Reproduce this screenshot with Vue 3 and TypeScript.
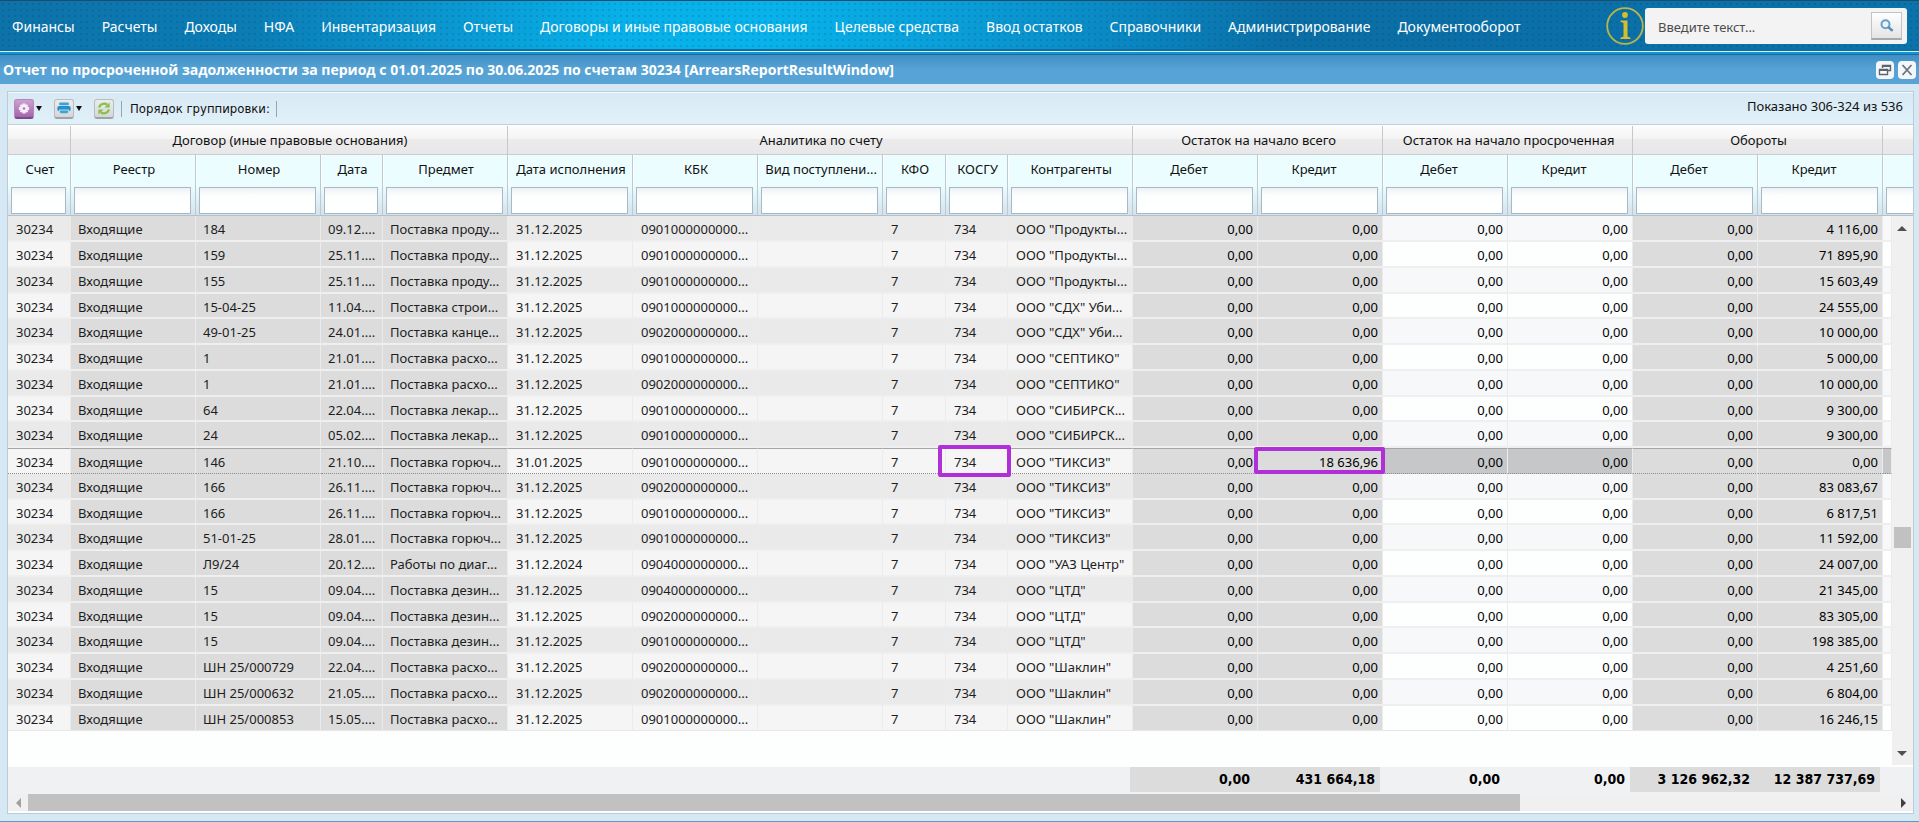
<script setup lang="ts">
import { ref } from 'vue'

interface Column {
  key: string
  label: string
  width: number
  tone: 'light' | 'dark' | 'plain'
  numeric?: boolean
}

interface Row {
  cells: string[]
  selected: boolean
}

const menu: string[] = [
  'Финансы', 'Расчеты', 'Доходы', 'НФА', 'Инвентаризация', 'Отчеты',
  'Договоры и иные правовые основания', 'Целевые средства', 'Ввод остатков',
  'Справочники', 'Администрирование', 'Документооборот',
]

const groups: { label: string; span: number }[] = [
  { label: '', span: 1 },
  { label: 'Договор (иные правовые основания)', span: 4 },
  { label: 'Аналитика по счету', span: 6 },
  { label: 'Остаток на начало всего', span: 2 },
  { label: 'Остаток на начало просроченная', span: 2 },
  { label: 'Обороты', span: 2 },
  { label: '', span: 1 },
]

const columns: Column[] = [
  { key: 'account', label: 'Счет', width: 63, tone: 'light' },
  { key: 'registry', label: 'Реестр', width: 125, tone: 'dark' },
  { key: 'number', label: 'Номер', width: 125, tone: 'dark' },
  { key: 'date', label: 'Дата', width: 62, tone: 'dark' },
  { key: 'subject', label: 'Предмет', width: 125, tone: 'dark' },
  { key: 'due', label: 'Дата исполнения', width: 125, tone: 'light' },
  { key: 'kbk', label: 'КБК', width: 125, tone: 'light' },
  { key: 'income', label: 'Вид поступлени...', width: 125, tone: 'light' },
  { key: 'kfo', label: 'КФО', width: 63, tone: 'light' },
  { key: 'kosgu', label: 'КОСГУ', width: 62, tone: 'light' },
  { key: 'partner', label: 'Контрагенты', width: 125, tone: 'light' },
  { key: 'openDebit', label: 'Дебет', width: 125, tone: 'dark', numeric: true },
  { key: 'openCredit', label: 'Кредит', width: 125, tone: 'dark', numeric: true },
  { key: 'overdueDebit', label: 'Дебет', width: 125, tone: 'plain', numeric: true },
  { key: 'overdueCredit', label: 'Кредит', width: 125, tone: 'plain', numeric: true },
  { key: 'turnDebit', label: 'Дебет', width: 125, tone: 'dark', numeric: true },
  { key: 'turnCredit', label: 'Кредит', width: 125, tone: 'dark', numeric: true },
]

const source: [string, string, string, string, string, string][] = [
  ['184', '09.12....', 'Поставка проду...', '0901', 'ООО "Продукты...', '4 116,00'],
  ['159', '25.11....', 'Поставка проду...', '0901', 'ООО "Продукты...', '71 895,90'],
  ['155', '25.11....', 'Поставка проду...', '0901', 'ООО "Продукты...', '15 603,49'],
  ['15-04-25', '11.04....', 'Поставка строи...', '0901', 'ООО "СДХ" Уби...', '24 555,00'],
  ['49-01-25', '24.01....', 'Поставка канце...', '0902', 'ООО "СДХ" Уби...', '10 000,00'],
  ['1', '21.01....', 'Поставка расхо...', '0901', 'ООО "СЕПТИКО"', '5 000,00'],
  ['1', '21.01....', 'Поставка расхо...', '0902', 'ООО "СЕПТИКО"', '10 000,00'],
  ['64', '22.04....', 'Поставка лекар...', '0901', 'ООО "СИБИРСК...', '9 300,00'],
  ['24', '05.02....', 'Поставка лекар...', '0901', 'ООО "СИБИРСК...', '9 300,00'],
  ['146', '21.10....', 'Поставка горюч...', '0901', 'ООО "ТИКСИЗ"', '0,00'],
  ['166', '26.11....', 'Поставка горюч...', '0902', 'ООО "ТИКСИЗ"', '83 083,67'],
  ['166', '26.11....', 'Поставка горюч...', '0901', 'ООО "ТИКСИЗ"', '6 817,51'],
  ['51-01-25', '28.01....', 'Поставка горюч...', '0901', 'ООО "ТИКСИЗ"', '11 592,00'],
  ['Л9/24', '20.12....', 'Работы по диаг...', '0904', 'ООО "УАЗ Центр"', '24 007,00'],
  ['15', '09.04....', 'Поставка дезин...', '0904', 'ООО "ЦТД"', '21 345,00'],
  ['15', '09.04....', 'Поставка дезин...', '0902', 'ООО "ЦТД"', '83 305,00'],
  ['15', '09.04....', 'Поставка дезин...', '0901', 'ООО "ЦТД"', '198 385,00'],
  ['ШН 25/000729', '22.04....', 'Поставка расхо...', '0902', 'ООО "Шаклин"', '4 251,60'],
  ['ШН 25/000632', '21.05....', 'Поставка расхо...', '0902', 'ООО "Шаклин"', '6 804,00'],
  ['ШН 25/000853', '15.05....', 'Поставка расхо...', '0901', 'ООО "Шаклин"', '16 246,15'],
]

const rows: Row[] = source.map(([num, date, subject, kbk, partner, credit]) => {
  const selected = num === '146'
  const due = selected ? '31.01.2025' : num === 'Л9/24' ? '31.12.2024' : '31.12.2025'
  return {
    selected,
    cells: [
      '30234', 'Входящие', num, date, subject, due, `${kbk}000000000...`, '', '7', '734', partner,
      '0,00', selected ? '18 636,96' : '0,00', '0,00', '0,00', '0,00', credit,
    ],
  }
})

const totals = ['0,00', '431 664,18', '0,00', '0,00', '3 126 962,32', '12 387 737,69']

const search = ref('')
const filters = ref<string[]>(columns.map(() => '').concat(''))

function mark(row: Row, key: string): string {
  if (!row.selected) return ''
  if (key === 'kosgu') return 'mark mark-tall'
  if (key === 'openCredit') return 'mark'
  return ''
}
</script>

<template>
  <div class="page">
    <header class="top">
      <nav class="menu">
        <button v-for="m in menu" :key="m" type="button">{{ m }}</button>
      </nav>
      <div class="tools">
        <svg class="info" viewBox="0 0 38 38" aria-hidden="true">
          <circle cx="19" cy="19" r="17.8" fill="none" stroke="#b9b646" stroke-width="1.8" />
          <circle cx="19" cy="8" r="2.9" fill="#d3bf2c" />
          <path d="M14.5 13.5h7v16l3 1.3v1.2h-10v-1.2l3-1.3V16l-3-1.2z" fill="#d3bf2c" />
        </svg>
        <div class="search">
          <input v-model="search" type="text" placeholder="Введите текст..." aria-label="Введите текст" />
          <button type="button" aria-label="Найти">
            <svg viewBox="0 0 16 16" aria-hidden="true">
              <circle cx="6.5" cy="6.2" r="4" fill="#e8f3fb" stroke="#6ba0c6" stroke-width="2" />
              <path d="M9.8 9.4l3 2.8" stroke="#5a90ba" stroke-width="2.6" stroke-linecap="round" />
            </svg>
          </button>
        </div>
      </div>
    </header>

    <section class="window">
      <div class="titlebar">
        <h1>Отчет по просроченной задолженности за период с 01.01.2025 по 30.06.2025 по счетам 30234 [ArrearsReportResultWindow]</h1>
        <div class="wbtns">
          <button type="button" aria-label="Восстановить">
            <svg viewBox="0 0 14 14" aria-hidden="true">
              <path d="M4.5 5V2.5h8v5h-3M4.5 3.2h8" fill="none" stroke="#5b656d" stroke-width="1.4" />
              <path d="M1.5 6.5h8v5h-8zM1.5 7.2h8" fill="#fff" stroke="#5b656d" stroke-width="1.4" />
            </svg>
          </button>
          <button type="button" aria-label="Закрыть">
            <svg viewBox="0 0 14 14" aria-hidden="true">
              <path d="M2.5 2l9 10M11.5 2l-9 10" stroke="#6b757d" stroke-width="1.8" />
            </svg>
          </button>
        </div>
      </div>

      <div class="panel">
        <div class="toolbar">
          <button class="tool" type="button" aria-label="Настройки">
            <span class="ico violet">
              <svg viewBox="0 0 18 17" aria-hidden="true">
                <g fill="#f6eef8">
                  <circle cx="9" cy="8.5" r="3.8" />
                  <path d="M7.4 3.4h3.2v10.2H7.4zM3.9 6.9h10.2v3.2H3.9z" />
                  <path d="M4.7 5.7l1.5-1.5 7.1 7.1-1.5 1.5zM11.8 4.2l1.5 1.5-7.1 7.1-1.5-1.5z" />
                </g>
                <circle cx="9" cy="8.5" r="1.3" fill="#b679b8" />
              </svg>
            </span>
            <span class="caret"></span>
          </button>
          <button class="tool" type="button" aria-label="Печать">
            <span class="ico">
              <svg viewBox="0 0 18 17" aria-hidden="true">
                <rect x="4.2" y="2.6" width="9.6" height="2.6" rx=".8" fill="#3aa3da" />
                <rect x="2.4" y="6" width="13.2" height="5.2" rx="1.6" fill="#2191d0" />
                <path d="M4.2 10h9.6l-.8 3.8H5z" fill="#3aa3da" stroke="#e6e6e6" stroke-width=".8" />
              </svg>
            </span>
            <span class="caret"></span>
          </button>
          <button class="tool last" type="button" aria-label="Обновить">
            <span class="ico">
              <svg viewBox="0 0 18 17" aria-hidden="true">
                <g fill="none" stroke="#86c04a" stroke-width="2.2">
                  <path d="M4.2 7.6A5 4.6 0 0 1 12.2 4.6" />
                  <path d="M13.8 9.4A5 4.6 0 0 1 5.8 12.4" />
                </g>
                <path d="M14.6 2.4v5H9.4zM3.4 14.6v-5h5.2z" fill="#86c04a" />
              </svg>
            </span>
          </button>
          <span class="sep"></span>
          <span class="group-order">Порядок группировки:</span>
          <span class="sep"></span>
          <span class="shown">Показано 306-324 из 536</span>
        </div>

        <div class="grid-head">
          <table>
            <colgroup>
              <col v-for="c in columns" :key="c.key" :class="'w' + c.width" />
              <col />
            </colgroup>
            <thead>
              <tr class="groups">
                <th v-for="(g, i) in groups" :key="i" :colspan="g.span">{{ g.label }}</th>
              </tr>
              <tr class="labels">
                <th v-for="c in columns" :key="c.key" :class="{ numeric: c.numeric }">{{ c.label }}</th>
                <th></th>
              </tr>
              <tr class="filters">
                <td v-for="(c, i) in columns" :key="c.key">
                  <input v-model="filters[i]" type="text" :aria-label="'Фильтр: ' + c.label" />
                </td>
                <td class="cut"><input v-model="filters[17]" type="text" aria-label="Фильтр" /></td>
              </tr>
            </thead>
          </table>
        </div>

        <div class="grid-main">
          <div class="grid-body">
            <table>
              <colgroup>
                <col v-for="c in columns" :key="c.key" :class="'w' + c.width" />
                <col />
              </colgroup>
              <tbody>
                <tr v-for="(r, i) in rows" :key="i" :class="{ selected: r.selected }">
                  <td
                    v-for="(c, j) in columns"
                    :key="c.key"
                    :class="[c.tone, mark(r, c.key), { numeric: c.numeric }]"
                  >{{ r.cells[j] }}</td>
                  <td class="plain"></td>
                </tr>
              </tbody>
            </table>
          </div>
          <div class="vscroll">
            <button type="button" aria-label="Вверх"><span class="arrow up"></span></button>
            <div class="track"><div class="above"></div><div class="thumb"></div><div class="below"></div></div>
            <button type="button" aria-label="Вниз"><span class="arrow down"></span></button>
          </div>
        </div>

        <div class="grid-foot">
          <table>
            <colgroup>
              <col class="w60" />
              <col v-for="c in columns.slice(1)" :key="c.key" :class="'w' + c.width" />
              <col />
            </colgroup>
            <tbody>
              <tr>
                <td colspan="11"></td>
                <td v-for="(t, i) in totals" :key="i" :class="{ dark: i !== 2 && i !== 3 }">{{ t }}</td>
                <td></td>
              </tr>
            </tbody>
          </table>
        </div>

        <div class="hscroll">
          <button type="button" aria-label="Влево"><span class="arrow left"></span></button>
          <div class="htrack"><div class="hthumb"></div></div>
          <button type="button" aria-label="Вправо"><span class="arrow right"></span></button>
        </div>
      </div>
    </section>
  </div>
</template>

<style>
body {
  margin: 0;
}
</style>

<style scoped>
.page {
  display: flex;
  flex-direction: column;
  box-sizing: border-box;
  min-height: 100vh;
  overflow: hidden;
  font-family: "Noto Sans", "DejaVu Sans", sans-serif;
  font-size: 13px;
  color: #111;
  background: #d6e8f3;
  border-bottom: 1px solid #5b9cc4;
}
button {
  font: inherit;
  border: 0;
  padding: 0;
  margin: 0;
  background: none;
  color: inherit;
}
input {
  font: inherit;
  box-sizing: border-box;
  margin: 0;
}

/* top menu */
.top {
  display: flex;
  align-items: center;
  justify-content: space-between;
  box-sizing: border-box;
  height: 55px;
  padding: 0 12px 4px;
  border-top: 1px solid #1d4d6c;
  background:
    linear-gradient(to bottom, transparent 48px, #0d6ea4 48px, #0d6ea4 50px, #cdf0fb 50px, #cdf0fb 51px, #1296cf 51px, #1296cf 53px, #1c6a9d 53px),
    radial-gradient(circle, rgba(0, 40, 90, 0.14) 1px, transparent 1px) 0 0 / 6px 6px,
    linear-gradient(100deg, #0d72a8 0%, #0b7cb4 13%, #0b93cc 22%, #07b0e8 32%, #07b3ea 40%, #0aa0da 49%, #0a80ba 61%, #0b6ea5 67%, #0b72aa 100%);
  color: #fff;
}
.menu {
  display: flex;
  gap: 27px;
  font-size: 14px;
  line-height: 24px;
  white-space: nowrap;
  padding-top: 2px;
}
.tools {
  display: flex;
  align-items: center;
  gap: 1px;
}
.info {
  width: 38px;
  height: 38px;
}
.search {
  display: flex;
  align-items: center;
  gap: 4px;
  box-sizing: border-box;
  width: 262px;
  height: 36px;
  padding: 0 5px 0 0;
  border-radius: 3px;
  background: #f3f3f3;
}
.search input {
  flex: 1;
  min-width: 0;
  height: 36px;
  border: 0;
  padding: 2px 0 0 13px;
  background: transparent;
  outline: 0;
  font-size: 13px;
}
.search input::placeholder {
  color: #4c4c4c;
  opacity: 1;
}
.search button {
  display: flex;
  align-items: center;
  justify-content: center;
  box-sizing: border-box;
  width: 31px;
  height: 28px;
  border: 1px solid #c3c3c3;
  border-bottom: 2px solid #a9a9ad;
  background: linear-gradient(#fff, #e4e4e6);
}
.search svg {
  width: 16px;
  height: 16px;
}

/* window frame */
.window {
  flex: 1;
  display: flex;
  flex-direction: column;
}
.titlebar {
  display: flex;
  align-items: center;
  justify-content: space-between;
  box-sizing: border-box;
  height: 29px;
  padding: 0 3px 0 3px;
  background: linear-gradient(#3f8fc5, #57a3d5 50%, #57a3d5);
}
.titlebar h1 {
  margin: 0;
  font: bold 14px/28px "Open Sans", "Noto Sans", sans-serif;
  color: #fff;
  white-space: nowrap;
}
.wbtns {
  display: flex;
  gap: 4px;
}
.wbtns button {
  display: flex;
  align-items: center;
  justify-content: center;
  width: 18px;
  height: 18px;
  border-radius: 4px;
  background: #f4f7f9;
}
.wbtns svg {
  width: 14px;
  height: 14px;
}
.panel {
  flex: 1;
  display: flex;
  flex-direction: column;
  margin: 7px 5px 7px 7px;
  border: 1px solid #b9cdd8;
  background: #fdfefe;
}

/* toolbar */
.toolbar {
  display: flex;
  align-items: center;
  box-sizing: border-box;
  height: 33px;
  padding: 0 10px 0 6px;
  border-top: 1px solid #f4fbff;
  border-bottom: 1px solid #c3cfd6;
  background: linear-gradient(#d8e9f4, #e1f1fa);
}
.tool {
  display: flex;
  align-items: center;
  gap: 2px;
  margin-right: 12px;
}
.tool.last {
  margin-right: 7px;
}
.ico {
  box-sizing: border-box;
  width: 20px;
  height: 20px;
  border: 1px solid #b9bdbf;
  border-bottom: 2px solid #9fa3a5;
  border-radius: 3px;
  background: linear-gradient(#ececec, #d6d6d6);
}
.ico svg {
  display: block;
  width: 18px;
  height: 17px;
}
.violet {
  border-color: #b786bb #b786bb #7a4c84;
  background: linear-gradient(#cda0d0, #a565ac);
}
.caret {
  border: 3px solid transparent;
  border-top: 5px solid #111;
  border-bottom: 0;
}
.sep {
  width: 1px;
  height: 16px;
  background: #93a9a9;
}
.group-order {
  padding: 0 6px 0 8px;
  font-family: "DejaVu Sans Condensed", "Noto Sans", sans-serif;
}
.shown {
  margin-left: auto;
  padding-bottom: 6px;
}

/* grid */
table {
  width: 100%;
  table-layout: fixed;
  border-collapse: separate;
  border-spacing: 0;
}
.w60 {
  width: 60px;
}
.w62 {
  width: 62px;
}
.w63 {
  width: 63px;
}
.w125 {
  width: 125px;
}
.grid-head {
  overflow: hidden;
  border-top: 1px solid #fff;
  border-bottom: 1px solid #b3c1cb;
}
th {
  padding: 0 0 0 2px;
  font-weight: normal;
  text-align: center;
  white-space: nowrap;
  overflow: hidden;
}
.groups th {
  height: 28px;
  border-bottom: 1px solid #c9cdd0;
  border-right: 1px solid #c6c8ca;
  background: linear-gradient(#fcfcfc, #f4f4f5 45%, #ebebec 46%, #e8e8ea);
}
.labels th {
  height: 27px;
  padding-bottom: 4px;
  border-right: 1px solid #bccad2;
  box-shadow: inset 1px 0 #fff;
  background: #ebfdff;
}
.labels th.numeric {
  padding-right: 14px;
}
.filters td {
  height: 29px;
  padding: 0 4px 0 3px;
  border-right: 1px solid #bccad2;
  background: linear-gradient(#ebfdff, #d3e2ed);
  overflow: hidden;
}
.groups th:last-child,
.labels th:last-child,
.filters td:last-child {
  border-right: 0;
}
.filters input {
  display: block;
  width: 100%;
  height: 27px;
  padding: 0 4px;
  border: 1px solid #a9b8c2;
  background: linear-gradient(#eef2f5, #fcfefe 30%, #fff);
}
.filters .cut {
  padding-right: 0;
}
.filters .cut input {
  border-right: 0;
}

.grid-main {
  flex: 1;
  display: flex;
}
.grid-body {
  flex: 1;
  min-width: 0;
}
.grid-body td {
  box-sizing: border-box;
  height: 26px;
  padding: 2px 0 0 8px;
  border-bottom: 2px solid #efefef;
  border-right: 1px solid #ebebeb;
  line-height: 20px;
  white-space: nowrap;
  color: #1d1d1d;
}
.grid-body tr:nth-child(4n) td {
  height: 25px;
}
.grid-body td.dark {
  padding-left: 7px;
}
.grid-body td.numeric {
  padding: 2px 4px 0 0;
  text-align: right;
  color: #000;
}
.grid-body .light {
  background: #f5f5f5;
}
.grid-body .plain {
  background: #fdfefe;
}
.grid-body tr:nth-child(odd) .light {
  background: #eaeaea;
}
.grid-body tr:nth-child(odd) .plain {
  background: #f7f8fa;
}
.grid-body .dark {
  background: #dcdcdc;
}
.grid-body tr:last-child td {
  border-bottom: 1px solid #e6e6e6;
}
.grid-body .selected td {
  border-top: 1px solid #a5a5a5;
  border-bottom: 1px dotted #8d8d8d;
}
.grid-body .selected .plain {
  background: #c6c7c8;
}
.mark {
  position: relative;
}
.mark::after {
  content: "";
  position: absolute;
  inset: -2px -3px -1px -4px;
  border: 4px solid #b02fd6;
  border-radius: 2px;
  z-index: 1;
}
.mark-tall::after {
  inset: -4px -4px -4px -8px;
}

/* scrollbars */
.vscroll {
  display: flex;
  flex-direction: column;
  width: 21px;
  margin-bottom: 2px;
  background: #f0f0f0;
}
.vscroll button {
  display: flex;
  align-items: center;
  justify-content: center;
  height: 24px;
  padding-right: 2px;
}
.track {
  flex: 1;
  display: flex;
  flex-direction: column;
}
.above {
  flex: 58;
}
.below {
  flex: 39;
}
.thumb {
  height: 21px;
  margin: 0 2px;
  background: #c1c1c1;
}
.arrow {
  border: 5px solid transparent;
}
.up {
  border-top: 0;
  border-bottom-color: #505050;
}
.down {
  border-bottom: 0;
  border-top-color: #505050;
}
.left {
  border-left: 0;
  border-right-color: #a0a0a0;
}
.right {
  border-right: 0;
  border-left-color: #404040;
}
.grid-foot {
  background: #f0f1f3;
  padding-bottom: 2px;
}
.grid-foot table {
  font: bold 14px/20px "DejaVu Sans Condensed", "Noto Sans", sans-serif;
  color: #000;
}
.grid-foot td {
  height: 25px;
  padding: 0 5px 2px 0;
  box-sizing: border-box;
  text-align: right;
  white-space: nowrap;
}
.grid-foot .dark {
  background: #dcdcdc;
}
.hscroll {
  display: flex;
  height: 17px;
  margin-bottom: 2px;
  background: #f0f0f0;
}
.hscroll button {
  display: flex;
  align-items: center;
  justify-content: center;
  width: 20px;
}
.htrack {
  flex: 1;
}
.hthumb {
  width: 80%;
  height: 17px;
  background: #c1c1c1;
}
</style>
